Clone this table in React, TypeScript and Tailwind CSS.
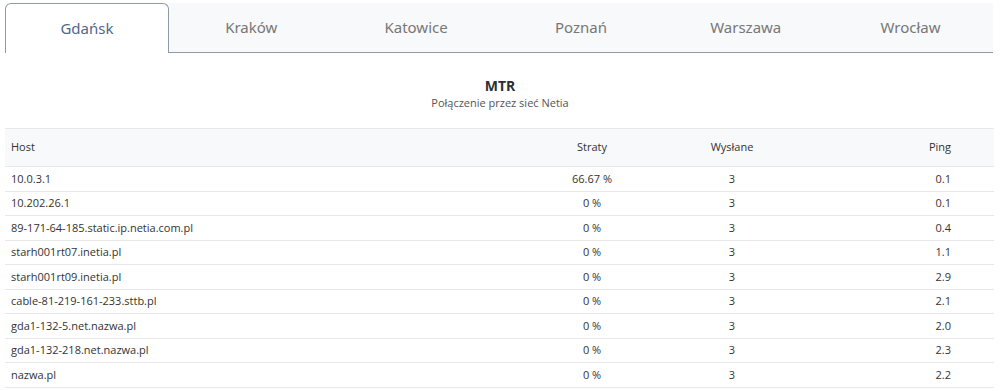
const tabs = ["Gdańsk", "Kraków", "Katowice", "Poznań", "Warszawa", "Wrocław"];

const rows = [
  ["10.0.3.1", "66.67 %", "3", "0.1"],
  ["10.202.26.1", "0 %", "3", "0.1"],
  ["89-171-64-185.static.ip.netia.com.pl", "0 %", "3", "0.4"],
  ["starh001rt07.inetia.pl", "0 %", "3", "1.1"],
  ["starh001rt09.inetia.pl", "0 %", "3", "2.9"],
  ["cable-81-219-161-233.sttb.pl", "0 %", "3", "2.1"],
  ["gda1-132-5.net.nazwa.pl", "0 %", "3", "2.0"],
  ["gda1-132-218.net.nazwa.pl", "0 %", "3", "2.3"],
  ["nazwa.pl", "0 %", "3", "2.2"],
];

export default function App() {
  return (
    <div className="w-[1000px] h-[391px] bg-white overflow-hidden" style={{ fontFamily: '"Open Sans", sans-serif' }}>
      {/* Tabs */}
      <div className="pt-[3px] px-[5px]">
        <div className="flex border-b border-[#8e9aa8] mr-[2px]">
          {tabs.map((t, i) =>
            i === 0 ? (
              <div
                key={t}
                className="w-[164px] h-[50px] -mb-px flex items-center justify-center bg-white border border-b-0 border-[#8e9aa8] rounded-t-[6px] text-[15px] text-[#52658a]"
                style={{ fontFamily: '"Noto Sans", sans-serif' }}
              >
                {t}
              </div>
            ) : (
              <div
                key={t}
                className="w-[165px] h-[49px] flex items-center justify-center bg-[#f8f9fa] text-[15px] text-[#777]"
                style={{ fontFamily: '"Noto Sans", sans-serif' }}
              >
                {t}
              </div>
            )
          )}
        </div>
      </div>

      {/* Heading */}
      <div className="text-center mt-[24px]">
        <div className="text-[14px] font-bold text-[#2b2f36] leading-[18px]">MTR</div>
        <div className="text-[11px] text-[#555] leading-[15px]">Połączenie przez sieć Netia</div>
      </div>

      {/* Table */}
      <div className="mx-[5px] mr-[6px] mt-[18px] text-[11px] text-[#333]">
        <div className="grid grid-cols-[1fr_130px_150px_187px] h-[39px] items-center bg-[#f8f9fa] border-t border-b border-[#e6e8ea]">
          <div className="pl-[6px]">Host</div>
          <div className="text-center">Straty</div>
          <div className="text-center">Wysłane</div>
          <div className="text-right pr-[43px]">Ping</div>
        </div>
        {rows.map((r) => (
          <div key={r[0]} className="grid grid-cols-[1fr_130px_150px_187px] h-[24.5px] items-center border-b border-[#e6e8ea]">
            <div className="pl-[6px]">{r[0]}</div>
            <div className="text-center">{r[1]}</div>
            <div className="text-center">{r[2]}</div>
            <div className="text-right pr-[43px]">{r[3]}</div>
          </div>
        ))}
      </div>
    </div>
  );
}
